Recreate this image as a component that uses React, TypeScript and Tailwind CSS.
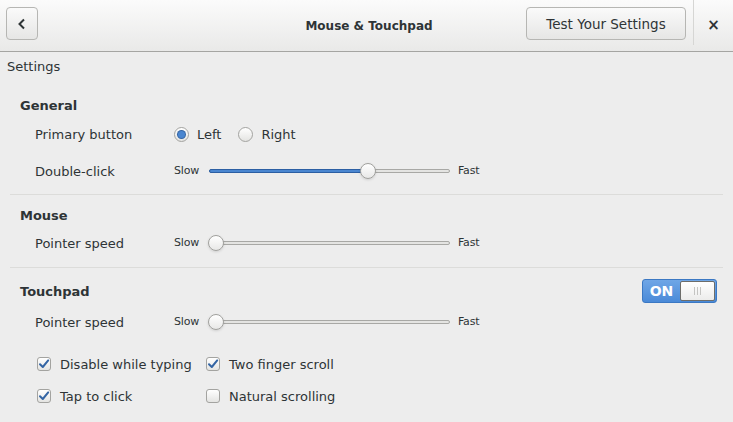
import React from "react";

const Slider = ({ value }: { value: number }) => {
  // value 0..1, knob position along the track
  const pct = `${value * 100}%`;
  return (
    <div className="flex items-center">
      <span className="w-[35px] pt-[1px] text-[11px] tracking-[-0.2px]">Slow</span>
      <div className="relative h-[16px] w-[241px]">
        <div className="absolute left-0 right-0 top-[6px] h-[4px] rounded-full border border-[#a8a8a5] bg-[#e4e4e2]" />
        <div
          className="absolute left-0 top-[6px] h-[4px] rounded-full border border-[#2c5fa3] bg-[#4a86d0]"
          style={{ width: pct }}
        />
        <div
          className="absolute top-0 h-[16px] w-[16px] -translate-x-1/2 rounded-full border border-[#a0a09d] bg-gradient-to-b from-white to-[#e8e8e7] shadow-sm"
          style={{ left: `calc(${pct} + ${value === 0 ? 7 : 0}px)` }}
        />
      </div>
      <span className="ml-[8px] pt-[1px] text-[11px] tracking-[-0.2px]">Fast</span>
    </div>
  );
};

const Check = ({ on, label }: { on: boolean; label: string }) => (
  <div className="flex items-center">
    <div className="flex h-[14px] w-[14px] items-center justify-center rounded-[3px] border border-[#a3a3a0] bg-gradient-to-b from-white to-[#e4e4e2]">
      {on && (
        <svg width="12" height="12" viewBox="0 0 12 12">
          <path d="M2 6.2 L4.8 9 L10.2 2.4" fill="none" stroke="#3465a4" strokeWidth="2" strokeLinecap="round" strokeLinejoin="round" />
        </svg>
      )}
    </div>
    <span className="ml-[9px] pt-[2px]">{label}</span>
  </div>
);

const Radio = ({ on, label }: { on: boolean; label: string }) => (
  <div className="flex items-center">
    <div className="flex h-[15px] w-[15px] items-center justify-center rounded-full border border-[#a3a3a0] bg-gradient-to-b from-white to-[#e4e4e2]">
      {on && <div className="h-[7px] w-[7px] rounded-full bg-[#4a86d0] ring-1 ring-[#3465a4]" />}
    </div>
    <span className="ml-[8px] pt-[2px]">{label}</span>
  </div>
);

const Row = ({ label, h, children }: { label: string; h: string; children: React.ReactNode }) => (
  <div className={`flex items-center pl-[35px] ${h}`}>
    <span className="w-[139px] pt-[2px]">{label}</span>
    {children}
  </div>
);

export default function App() {
  return (
    <div
      className="h-[422px] w-[733px] overflow-hidden bg-[#ededed] text-[13px] text-[#2e3436]"
      style={{ fontFamily: '"DejaVu Sans", sans-serif' }}
    >
      {/* Header bar */}
      <div className="flex h-[52px] items-start border-b border-[#a5a5a2] bg-gradient-to-b from-[#fbfbfb] to-[#e9e9e8]">
        <button className="ml-[6px] mt-[7px] flex h-[33px] w-[32px] items-center justify-center rounded-[4px] border border-[#b6b6b3] bg-gradient-to-b from-[#fafafa] to-[#e6e6e5]">
          <svg width="10" height="12" viewBox="0 0 10 12">
            <path d="M7 1.5 L2.5 6 L7 10.5" fill="none" stroke="#2e3436" strokeWidth="2" />
          </svg>
        </button>
        <div className="flex h-[48px] flex-1 items-center justify-center pl-[174px] pt-[3px] text-[12px] font-bold">
          Mouse &amp; Touchpad
        </div>
        <button className="mt-[7px] h-[33px] w-[160px] rounded-[4px] border border-[#b6b6b3] bg-gradient-to-b from-[#fafafa] to-[#e6e6e5] pt-[2px] text-[13.5px] text-[#2e3436]">
          Test Your Settings
        </button>
        <div className="ml-[7px] h-[45px] w-px bg-[#d6d6d4]" />
        <div className="flex h-[48px] w-[39px] items-center justify-center pt-[2px] text-[15px] font-bold">×</div>
      </div>

      <div className="flex h-[28px] items-center pl-[7px] pt-[2px]">Settings</div>

      {/* General */}
      <div className="mt-[13px] flex h-[24px] items-center pl-[20px] pt-[2px] font-bold">General</div>
      <Row label="Primary button" h="h-[34px]">
        <div className="flex items-center gap-[17px]">
          <Radio on label="Left" />
          <Radio on={false} label="Right" />
        </div>
      </Row>
      <Row label="Double-click" h="h-[40px]">
        <Slider value={0.66} />
      </Row>
      <div className="mx-[10px] mt-[3px] h-px bg-[#dcdcda]" />

      {/* Mouse */}
      <div className="mt-[8px] flex h-[24px] items-center pl-[20px] pt-[2px] font-bold">Mouse</div>
      <Row label="Pointer speed" h="h-[32px]">
        <Slider value={0} />
      </Row>
      <div className="mx-[10px] mt-[8px] h-px bg-[#dcdcda]" />

      {/* Touchpad */}
      <div className="mt-[11px] flex h-[24px] items-center justify-between pl-[20px] pr-[16px]">
        <span className="pt-[2px] font-bold">Touchpad</span>
        <div className="flex h-[24px] w-[75px] overflow-hidden rounded-[3px] border border-[#3b78c3] bg-gradient-to-b from-[#6fa6e6] to-[#4a8ad8]">
          <div className="flex w-[37px] items-center justify-center pt-[1px] text-[14px] font-bold text-white">ON</div>
          <div className="my-px mr-px flex flex-1 items-center justify-center rounded-[2px] border border-[#6d6d6a] bg-gradient-to-b from-white to-[#ececeb]">
            <div className="flex gap-[2px]">
              <div className="h-[8px] w-px bg-[#c4c4c2]" />
              <div className="h-[8px] w-px bg-[#c4c4c2]" />
              <div className="h-[8px] w-px bg-[#c4c4c2]" />
            </div>
          </div>
        </div>
      </div>
      <Row label="Pointer speed" h="h-[38px]">
        <Slider value={0} />
      </Row>
      <div className="mt-[7px] pl-[37px]">
        <div className="flex h-[32px] items-center">
          <div className="w-[169px]">
            <Check on label="Disable while typing" />
          </div>
          <Check on label="Two finger scroll" />
        </div>
        <div className="flex h-[32px] items-center">
          <div className="w-[169px]">
            <Check on label="Tap to click" />
          </div>
          <Check on={false} label="Natural scrolling" />
        </div>
      </div>
    </div>
  );
}
